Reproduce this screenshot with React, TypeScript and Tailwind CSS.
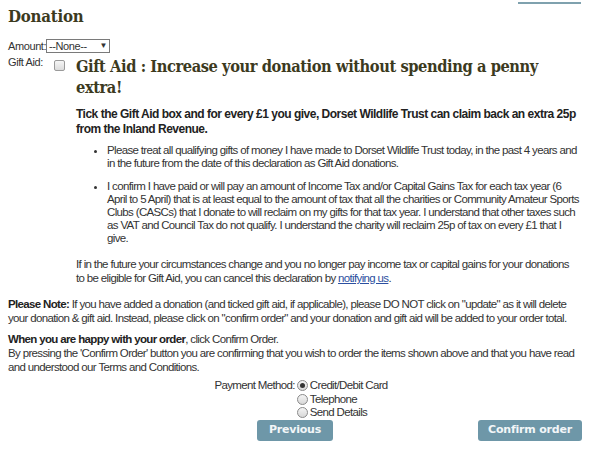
import React from "react";

const slab = "font-['DejaVu_Serif',serif] font-bold text-[#3c3a1e]";
const body = "text-[11.5px] tracking-[-0.65px]";

function Radio({ checked }: { checked?: boolean }) {
  return (
    <span className="mr-[1px] inline-flex h-[11px] w-[11px] items-center justify-center rounded-full border border-[#8a8a8a] bg-gradient-to-b from-[#f4f4f4] to-[#d8d8d8]">
      {checked ? <span className="h-[5px] w-[5px] rounded-full bg-[#333]" /> : null}
    </span>
  );
}

export default function App() {
  return (
    <div className="relative h-[449px] w-[594px] overflow-hidden bg-white font-['Liberation_Sans',Arial,sans-serif] text-[#333]">
      <div className="absolute right-[13px] top-[2px] h-[2px] w-[63px] bg-[#7fa1ae]" />

      <div className="px-[8px] pt-[3px]">
        <h1 className={`${slab} text-[17.5px] leading-[26px] tracking-[-0.3px]`}>
          <span className="inline-block origin-left [transform:scaleX(0.86)]">Donation</span>
        </h1>

        <div className="mt-[10px] flex items-center text-[11px] leading-[14px] tracking-[-0.4px]">
          <span className="w-[38px]">Amount:</span>
          <span className="flex h-[14px] w-[64px] items-center justify-between border border-[#7a7a7a] bg-white px-[2px]">
            <span>--None--</span>
            <span className="text-[8px]">▼</span>
          </span>
        </div>

        <div className="mt-[1px] flex">
          <span className="w-[46px] pt-[1px] text-[11px] leading-[14px] tracking-[-0.4px]">Gift Aid:</span>
          <span className="mt-[6px] h-[11px] w-[11px] rounded-[2px] border border-[#9a9a9a] bg-gradient-to-b from-[#f6f6f6] to-[#dcdcdc]" />
          <div className="ml-[11px] min-w-0 flex-1">
            <h2 className={`${slab} mt-[2px] text-[16.5px] leading-[21px] tracking-[-0.5px]`}>
              <span className="block origin-left whitespace-nowrap [transform:scaleX(0.89)]">
                Gift Aid : Increase your donation without spending a penny
              </span>
              <span className="block origin-left whitespace-nowrap [transform:scaleX(0.89)]">extra!</span>
            </h2>
            <p className="mt-[9px] pr-[8px] text-[12px] font-bold leading-[15px] tracking-[-0.5px] text-[#222]">
              Tick the Gift Aid box and for every £1 you give, Dorset Wildlife Trust can claim back an extra 25p from the Inland Revenue.
            </p>
            <ul className={`mt-[7px] list-disc pl-[31px] ${body} leading-[13px]`}>
              <li className="pr-[6px]">
                Please treat all qualifying gifts of money I have made to Dorset Wildlife Trust today, in the past 4 years and in the future from the date of this declaration as Gift Aid donations.
              </li>
              <li className="mt-[10px] whitespace-nowrap">
                I confirm I have paid or will pay an amount of Income Tax and/or Capital Gains Tax for each tax year (6
                <br />
                April to 5 April) that is at least equal to the amount of tax that all the charities or Community Amateur Sports
                <br />
                Clubs (CASCs) that I donate to will reclaim on my gifts for that tax year. I understand that other taxes such
                <br />
                as VAT and Council Tax do not qualify. I understand the charity will reclaim 25p of tax on every £1 that I
                <br />
                give.
              </li>
            </ul>
            <p className={`mt-[12px] pr-[8px] ${body} leading-[14px]`}>
              If in the future your circumstances change and you no longer pay income tax or capital gains for your donations to be eligible for Gift Aid, you can cancel this declaration by{" "}
              <a href="#" className="text-[#2b4fa0] underline">notifying us</a>.
            </p>
          </div>
        </div>

        <p className={`mt-[12px] pr-[4px] ${body} leading-[14px]`}>
          <b className="text-[#222]">Please Note:</b> If you have added a donation (and ticked gift aid, if applicable), please DO NOT click on "update" as it will delete your donation &amp; gift aid. Instead, please click on "confirm order" and your donation and gift aid will be added to your order total.
        </p>
        <p className={`mt-[7px] pr-[4px] ${body} leading-[14px]`}>
          <b className="text-[#222]">When you are happy with your order</b>, click Confirm Order.
          <br />
          By pressing the 'Confirm Order' button you are confirming that you wish to order the items shown above and that you have read and understood our Terms and Conditions.
        </p>

        <div className={`mt-[5px] flex justify-center ${body} leading-[13.5px]`}>
          <div className="flex pl-[8px]">
            <span className="mr-[2px]">Payment Method:</span>
            <div className="flex flex-col">
              <label className="flex items-center gap-[1px]"><Radio checked />Credit/Debit Card</label>
              <label className="flex items-center gap-[1px]"><Radio />Telephone</label>
              <label className="flex items-center gap-[1px]"><Radio />Send Details</label>
            </div>
          </div>
        </div>

        <div className="relative h-[22px]">
          <button className="absolute left-[249px] top-0 h-[21px] w-[76px] rounded-[3px] bg-[#6e97a8] font-['DejaVu_Sans',sans-serif] text-[11px] font-bold tracking-[-0.2px] text-[#f2f6f8]">
            Previous
          </button>
          <button className="absolute left-[470px] top-0 h-[21px] w-[104px] rounded-[3px] bg-[#6e97a8] font-['DejaVu_Sans',sans-serif] text-[11px] font-bold tracking-[-0.2px] text-[#f2f6f8]">
            Confirm order
          </button>
        </div>
      </div>
    </div>
  );
}
